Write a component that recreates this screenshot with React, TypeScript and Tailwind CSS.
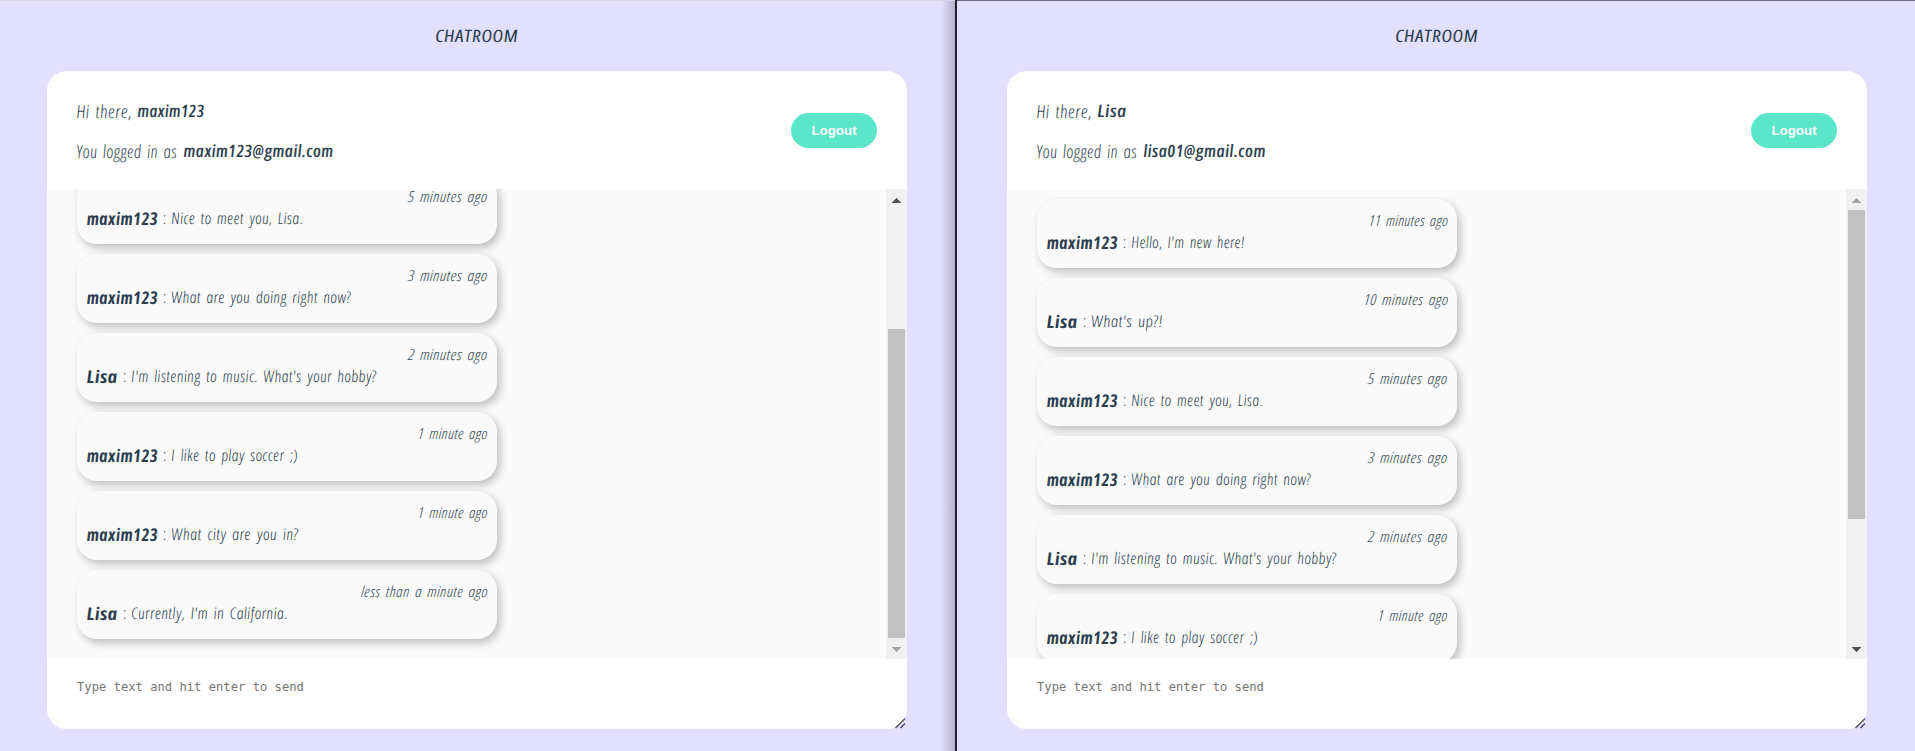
import { useLayoutEffect, useRef, useState } from "react";
import clsx from "clsx";

type FitProps = { text: string; width: number; skew?: number; className?: string };

/** Text condensed horizontally so that it takes exactly `width` pixels. */
function Fit({ text, width, skew = 0, className }: FitProps) {
  const ref = useRef<HTMLSpanElement>(null);
  const [scale, setScale] = useState(1);
  useLayoutEffect(() => {
    if (ref.current) setScale(width / ref.current.offsetWidth);
  }, [text, width]);
  return (
    <span className="block shrink-0" style={{ width }}>
      <span
        ref={ref}
        className={clsx("block w-max origin-[0_75%] tracking-[0.4px] whitespace-nowrap [word-spacing:2px]", className)}
        style={{ transform: `scaleX(${scale}) skewX(${skew}deg)` }}
      >
        {text}
      </span>
    </span>
  );
}

type Message = { author: string; text: string; width: number; time: string; timeWidth: number };

const messages: Message[] = [
  { author: "maxim123", text: "Hello, I'm new here!", width: 114, time: "11 minutes ago", timeWidth: 79 },
  { author: "Lisa", text: "What's up?!", width: 72, time: "10 minutes ago", timeWidth: 84 },
  { author: "maxim123", text: "Nice to meet you, Lisa.", width: 132, time: "5 minutes ago", timeWidth: 80 },
  { author: "maxim123", text: "What are you doing right now?", width: 180, time: "3 minutes ago", timeWidth: 80 },
  { author: "Lisa", text: "I'm listening to music. What's your hobby?", width: 245, time: "2 minutes ago", timeWidth: 80 },
  { author: "maxim123", text: "I like to play soccer ;)", width: 127, time: "1 minute ago", timeWidth: 70 },
  { author: "maxim123", text: "What city are you in?", width: 127, time: "1 minute ago", timeWidth: 70 },
  { author: "Lisa", text: "Currently, I'm in California.", width: 156, time: "less than a minute ago", timeWidth: 127 },
];

function Bubble({ m }: { m: Message }) {
  return (
    <div className="h-[69px] w-[420px] shrink-0 rounded-[20px] bg-[#fafafa] pt-[11px] pr-[9px] pl-[10px] shadow-[3px_4px_8px_rgba(0,0,0,0.24)]">
      <div className="flex h-[21px] justify-end">
        <Fit text={m.time} width={m.timeWidth} skew={-2} className="text-[15px]/[20px] font-light italic" />
      </div>
      <div className="flex h-[22px]">
        <Fit text={m.author} width={m.author === "Lisa" ? 31 : 71} skew={6} className="text-[17.5px]/[22px] font-bold italic" />
        <span className="ml-[5px] w-[9px] text-[16px]/[22px] font-light">:</span>
        <Fit text={m.text} width={m.width} skew={7} className="text-[16px]/[22px] font-light italic" />
      </div>
    </div>
  );
}

function Arrow({ down, active }: { down?: boolean; active: boolean }) {
  return (
    <div className="flex h-[21px] items-center justify-center">
      <svg width="9" height="5" className={clsx("mt-[2px] block", active ? "fill-[#505050]" : "fill-[#a3a3a3]")} shapeRendering="crispEdges">
        <path d={down ? "M0 0h9L4.5 5z" : "M0 5h9L4.5 0z"} />
      </svg>
    </div>
  );
}

function Scrollbar({ atEnd }: { atEnd: boolean }) {
  return (
    <div className="flex w-[21px] flex-col bg-[#f0f0f0]">
      <Arrow active={atEnd} />
      <div className={clsx("flex flex-1 flex-col px-[2px]", atEnd ? "justify-end" : "justify-start")}>
        <div className="h-[309px] bg-[#c1c1c1]" />
      </div>
      <Arrow down active={!atEnd} />
    </div>
  );
}

type ChatProps = {
  name: string;
  nameWidth: number;
  email: string;
  emailWidth: number;
  items: Message[];
  atEnd: boolean;
};

function Chat({ name, nameWidth, email, emailWidth, items, atEnd }: ChatProps) {
  return (
    <div className="flex w-[860px] flex-col">
      <h1 className="flex h-[70px] justify-center pt-[24px]">
        <Fit text="CHATROOM" width={83} skew={6} className="text-[17px]/[22px] font-medium italic" />
      </h1>
      <main className="h-[658px] rounded-[20px] bg-white">
        <header className="flex h-[118px] items-center justify-between pr-[30px] pl-[30px]">
          <div className="flex flex-col gap-[16px] pt-[1px]">
            <p className="flex h-6 gap-[6px]">
              <Fit text="Hi there," width={55} skew={7} className="text-[18px]/[24px] font-light italic" />
              <Fit text={name} width={nameWidth} skew={6} className="text-[17px]/[24px] font-semibold italic" />
            </p>
            <p className="flex h-6 gap-[6px]">
              <Fit text="You logged in as" width={101} skew={7} className="text-[18px]/[24px] font-light italic" />
              <Fit text={email} width={emailWidth} skew={6} className="text-[17px]/[24px] font-semibold italic" />
            </p>
          </div>
          <button className="mt-[1px] h-[35px] w-[86px] rounded-[20px] bg-[#5be5c9] font-['Liberation_Sans',sans-serif] text-[13.333px] font-bold text-white">
            Logout
          </button>
        </header>
        <section className="flex h-[470px] bg-[#fafafa]">
          <div
            className={clsx(
              "flex flex-1 flex-col gap-[10px] overflow-hidden px-[30px]",
              atEnd ? "justify-end pb-[20px]" : "justify-start pt-[10px]",
            )}
          >
            {items.map((m) => (
              <Bubble key={m.time + m.text} m={m} />
            ))}
          </div>
          <Scrollbar atEnd={atEnd} />
        </section>
        <footer className="flex h-[70px] items-start justify-between pt-[20px] pl-[30px]">
          <span className="font-['DejaVu_Sans_Mono',monospace] text-[12.17px]/[16px] text-[#757575]">
            Type text and hit enter to send
          </span>
          <svg width="12" height="12" className="mt-[38px] block stroke-[#50505a]" strokeWidth="1.5" fill="none">
            <path d="M.5 11 10 1.5M5.5 11 10 6.5" />
          </svg>
        </footer>
      </main>
    </div>
  );
}

export default function App() {
  return (
    <div className="flex h-[751px] w-[1915px] overflow-hidden bg-[#e3dfff] font-['Open_Sans',sans-serif] text-[#2c3e50] [font-stretch:75%]">
      <div className="flex w-[955px] border-t border-[#d8d5e6] pl-[47px]">
        <Chat name="maxim123" nameWidth={67} email="maxim123@gmail.com" emailWidth={150} items={messages.slice(2)} atEnd />
        <div className="ml-auto w-[14px] bg-linear-to-r from-transparent to-[#b5b2cc]" />
      </div>
      <div className="w-[2px] bg-[#23202f]" />
      <div className="flex flex-1 border-t border-[#6a667a] pl-[50px]">
        <Chat name="Lisa" nameWidth={29} email="lisa01@gmail.com" emailWidth={122} items={messages.slice(0, 6)} atEnd={false} />
      </div>
    </div>
  );
}
